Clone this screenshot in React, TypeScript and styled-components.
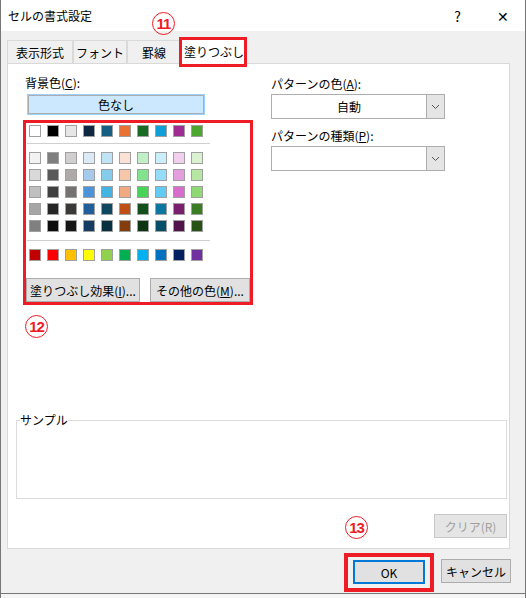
import React from "react";
import styled, { createGlobalStyle } from "styled-components";

const G = createGlobalStyle`
  html,body{margin:0;padding:0;background:#fff;}
  body{font-family:"Noto Sans CJK JP","Noto Sans",sans-serif;font-size:12px;color:#000;}
`;
const Win = styled.div`
  width:526px;height:598px;position:relative;box-sizing:border-box;overflow:hidden;
  background:#f0f0f0;border-left:1px solid #777;border-right:1px solid #777;
`;
const Title = styled.div`
  height:31px;background:#fff;display:flex;align-items:center;padding:0 0 0 7px;
  font-size:12px;
`;
const TitleText = styled.div`flex:1;`;
const TBtn = styled.div`width:45px;text-align:center;font-size:14px;`;
const Tabs = styled.div`
  display:flex;align-items:flex-end;height:32px;padding-left:6px;box-sizing:border-box;
`;
const Tab = styled.div<{ $sel?: boolean; $w: number }>`
  width:${p => p.$w}px;height:${p => (p.$sel ? 27 : 23)}px;box-sizing:border-box;
  border:1px solid #d9d9d9;border-bottom:none;background:${p => (p.$sel ? "#fff" : "#f0f0f0")};
  display:flex;align-items:center;justify-content:center;font-size:12px;
  margin-bottom:${p => (p.$sel ? -1 : 0)}px;position:relative;z-index:${p => (p.$sel ? 2 : 1)};
`;
const Panel = styled.div`
  margin-left:6px;width:503px;height:486px;box-sizing:border-box;background:#fff;
  border:1px solid #d9d9d9;position:relative;padding:10px 0 0 17px;
`;
const Cols = styled.div`display:flex;`;
const Left = styled.div`width:246px;display:flex;flex-direction:column;`;
const Right = styled.div`display:flex;flex-direction:column;margin-top:1px;`;
const Label = styled.div`height:17px;line-height:17px;font-size:12px;`;
const NoColor = styled.div`
  margin:3px 0 0 2px;width:178px;height:21px;box-sizing:border-box;background:#cce8ff;
  border:1px solid #99d1ff;outline:1px solid #adadad;outline-offset:-2px;
  display:flex;align-items:center;justify-content:center;
`;
const PalBox = styled.div`
  margin:5px 0 0 -2px;width:230px;height:185px;box-sizing:border-box;border:3px solid #ee1c25;
  display:flex;flex-direction:column;padding:2px 0 0 3px;
`;
const Row = styled.div<{ $mt?: number }>`display:flex;gap:6px;margin-top:${p => p.$mt ?? 0}px;`;
const Sw = styled.div`width:12px;height:12px;box-sizing:border-box;border:1px solid #a0a0a0;`;
const Sep = styled.div<{ $mt: number }>`width:183px;height:1px;background:#d0d0d0;margin:${p => p.$mt}px 0 0 -2px;`;
const BtnRow = styled.div`display:flex;justify-content:space-between;margin:17px 0 0 -3px;width:224px;`;
const GBtn = styled.div<{ $w: number }>`
  width:${p => p.$w}px;height:24px;box-sizing:border-box;background:#e1e1e1;border:1px solid #adadad;
  display:flex;align-items:center;justify-content:center;font-size:12px;
`;
const Sel = styled.div`
  width:174px;height:25px;box-sizing:border-box;border:1px solid #adadad;display:flex;margin:2px 0 8px;
`;
const SelText = styled.div`flex:1;display:flex;align-items:center;justify-content:center;`;
const Caret = styled.div`
  width:17px;background:#e5e5e5;border-left:1px solid #adadad;display:flex;align-items:center;justify-content:center;
`;
const Sample = styled.fieldset`
  position:absolute;left:8px;top:350px;width:491px;height:85px;box-sizing:border-box;
  border:1px solid #dcdcdc;margin:0;padding:0;
  legend{padding:0;margin-left:3px;font-size:12px;line-height:12px;}
`;
const Clear = styled(GBtn)`position:absolute;left:426px;top:450px;color:#a0a0a0;background:#e5e5e5;border-color:#c8c8c8;`;
const Footer = styled.div`display:flex;justify-content:flex-end;gap:7px;padding:10px 14px 0 0;`;
const OkWrap = styled.div`border:4px solid #ee1c25;padding:3px 5px 4px;margin-top:-6px;`;
const Ok = styled(GBtn)`border:2px solid #0078d7;`;
const RedOutline = styled.div`position:absolute;border:3px solid #ee1c25;pointer-events:none;z-index:5;`;
const Circ = styled.div<{ $x: number; $y: number }>`
  position:absolute;left:${p => p.$x}px;top:${p => p.$y}px;width:23px;height:23px;border:1.5px solid #ee1c25;
  border-radius:50%;color:#ee1c25;font-weight:bold;font-size:15px;display:flex;align-items:center;justify-content:center;
  font-family:"Liberation Sans",sans-serif;letter-spacing:-1px;background:transparent;box-sizing:border-box;
`;
const Bottom = styled.div`position:absolute;left:0;right:0;top:593px;height:5px;background:#f5f5f5;border-top:1px solid #777;`;

const theme = ["fff","000","e7e6e6","0e2841","156082","e97132","196b24","0f9ed5","a02b93","4ea72e"];
const tints = [
  ["f2f2f2","7f7f7f","d0cece","dceaf7","c0e4f5","fbe2d5","c1f0c8","caeefb","f2ceef","daf2d0"],
  ["d9d9d9","595959","aeaaaa","a6caec","83cceb","f7c7ac","83e28e","94dcf8","e59edd","b5e6a2"],
  ["bfbfbf","404040","757171","4d93d9","44b3e1","f1a983","47d459","61cbf3","d86dcd","8ed973"],
  ["a6a6a6","262626","3b3838","215f9a","0f4761","c04f15","124f1a","0b76a0","7a1f6d","3b7d23"],
  ["808080","0d0d0d","171616","153d64","0a2f40","833c0c","0d3512","074f69","511349","275317"],
];
const std = ["c00000","ff0000","ffc000","ffff00","92d050","00b050","00b0f0","0070c0","002060","7030a0"];
const Sws = ({ c }: { c: string[] }) => <>{c.map((x, i) => <Sw key={i} style={{ background: "#" + x }} />)}</>;
const Chev = () => (
  <svg width="9" height="6" viewBox="0 0 9 6"><path d="M1 1l3.5 3.5L8 1" fill="none" stroke="#555" strokeWidth="1" /></svg>
);

export default function App() {
  return (
    <Win>
      <G />
      <Title>
        <TitleText>セルの書式設定</TitleText>
        <TBtn>?</TBtn>
        <TBtn>✕</TBtn>
      </Title>
      <Tabs>
        <Tab $w={66}>表示形式</Tab>
        <Tab $w={54}>フォント</Tab>
        <Tab $w={54}>罫線</Tab>
        <Tab $w={66} $sel>塗りつぶし</Tab>
      </Tabs>
      <Panel>
        <Cols>
          <Left>
            <Label>背景色(<u>C</u>):</Label>
            <NoColor>色なし</NoColor>
            <PalBox>
              <Row><Sws c={theme} /></Row>
              <Sep $mt={6} />
              <Row $mt={8}><Sws c={tints[0]} /></Row>
              {tints.slice(1).map((r, i) => <Row key={i} $mt={5}><Sws c={r} /></Row>)}
              <Sep $mt={8} />
              <Row $mt={8}><Sws c={std} /></Row>
              <BtnRow>
                <GBtn $w={114}>塗りつぶし効果(<u>I</u>)...</GBtn>
                <GBtn $w={100}>その他の色(<u>M</u>)...</GBtn>
              </BtnRow>
            </PalBox>
          </Left>
          <Right>
            <Label>パターンの色(<u>A</u>):</Label>
            <Sel><SelText>自動</SelText><Caret><Chev /></Caret></Sel>
            <Label>パターンの種類(<u>P</u>):</Label>
            <Sel><SelText /><Caret><Chev /></Caret></Sel>
          </Right>
        </Cols>
        <Sample><legend>サンプル</legend></Sample>
        <Clear $w={73}>クリア(R)</Clear>
      </Panel>
      <Footer>
        <OkWrap><Ok $w={72}>OK</Ok></OkWrap>
        <GBtn $w={70}>キャンセル</GBtn>
      </Footer>
      <RedOutline style={{ left: 178, top: 37, width: 68, height: 30, boxSizing: "border-box" }} />
      <Circ $x={151} $y={12}>11</Circ>
      <Circ $x={24} $y={315}>12</Circ>
      <Circ $x={344} $y={516}>13</Circ>
      <Bottom />
    </Win>
  );
}
